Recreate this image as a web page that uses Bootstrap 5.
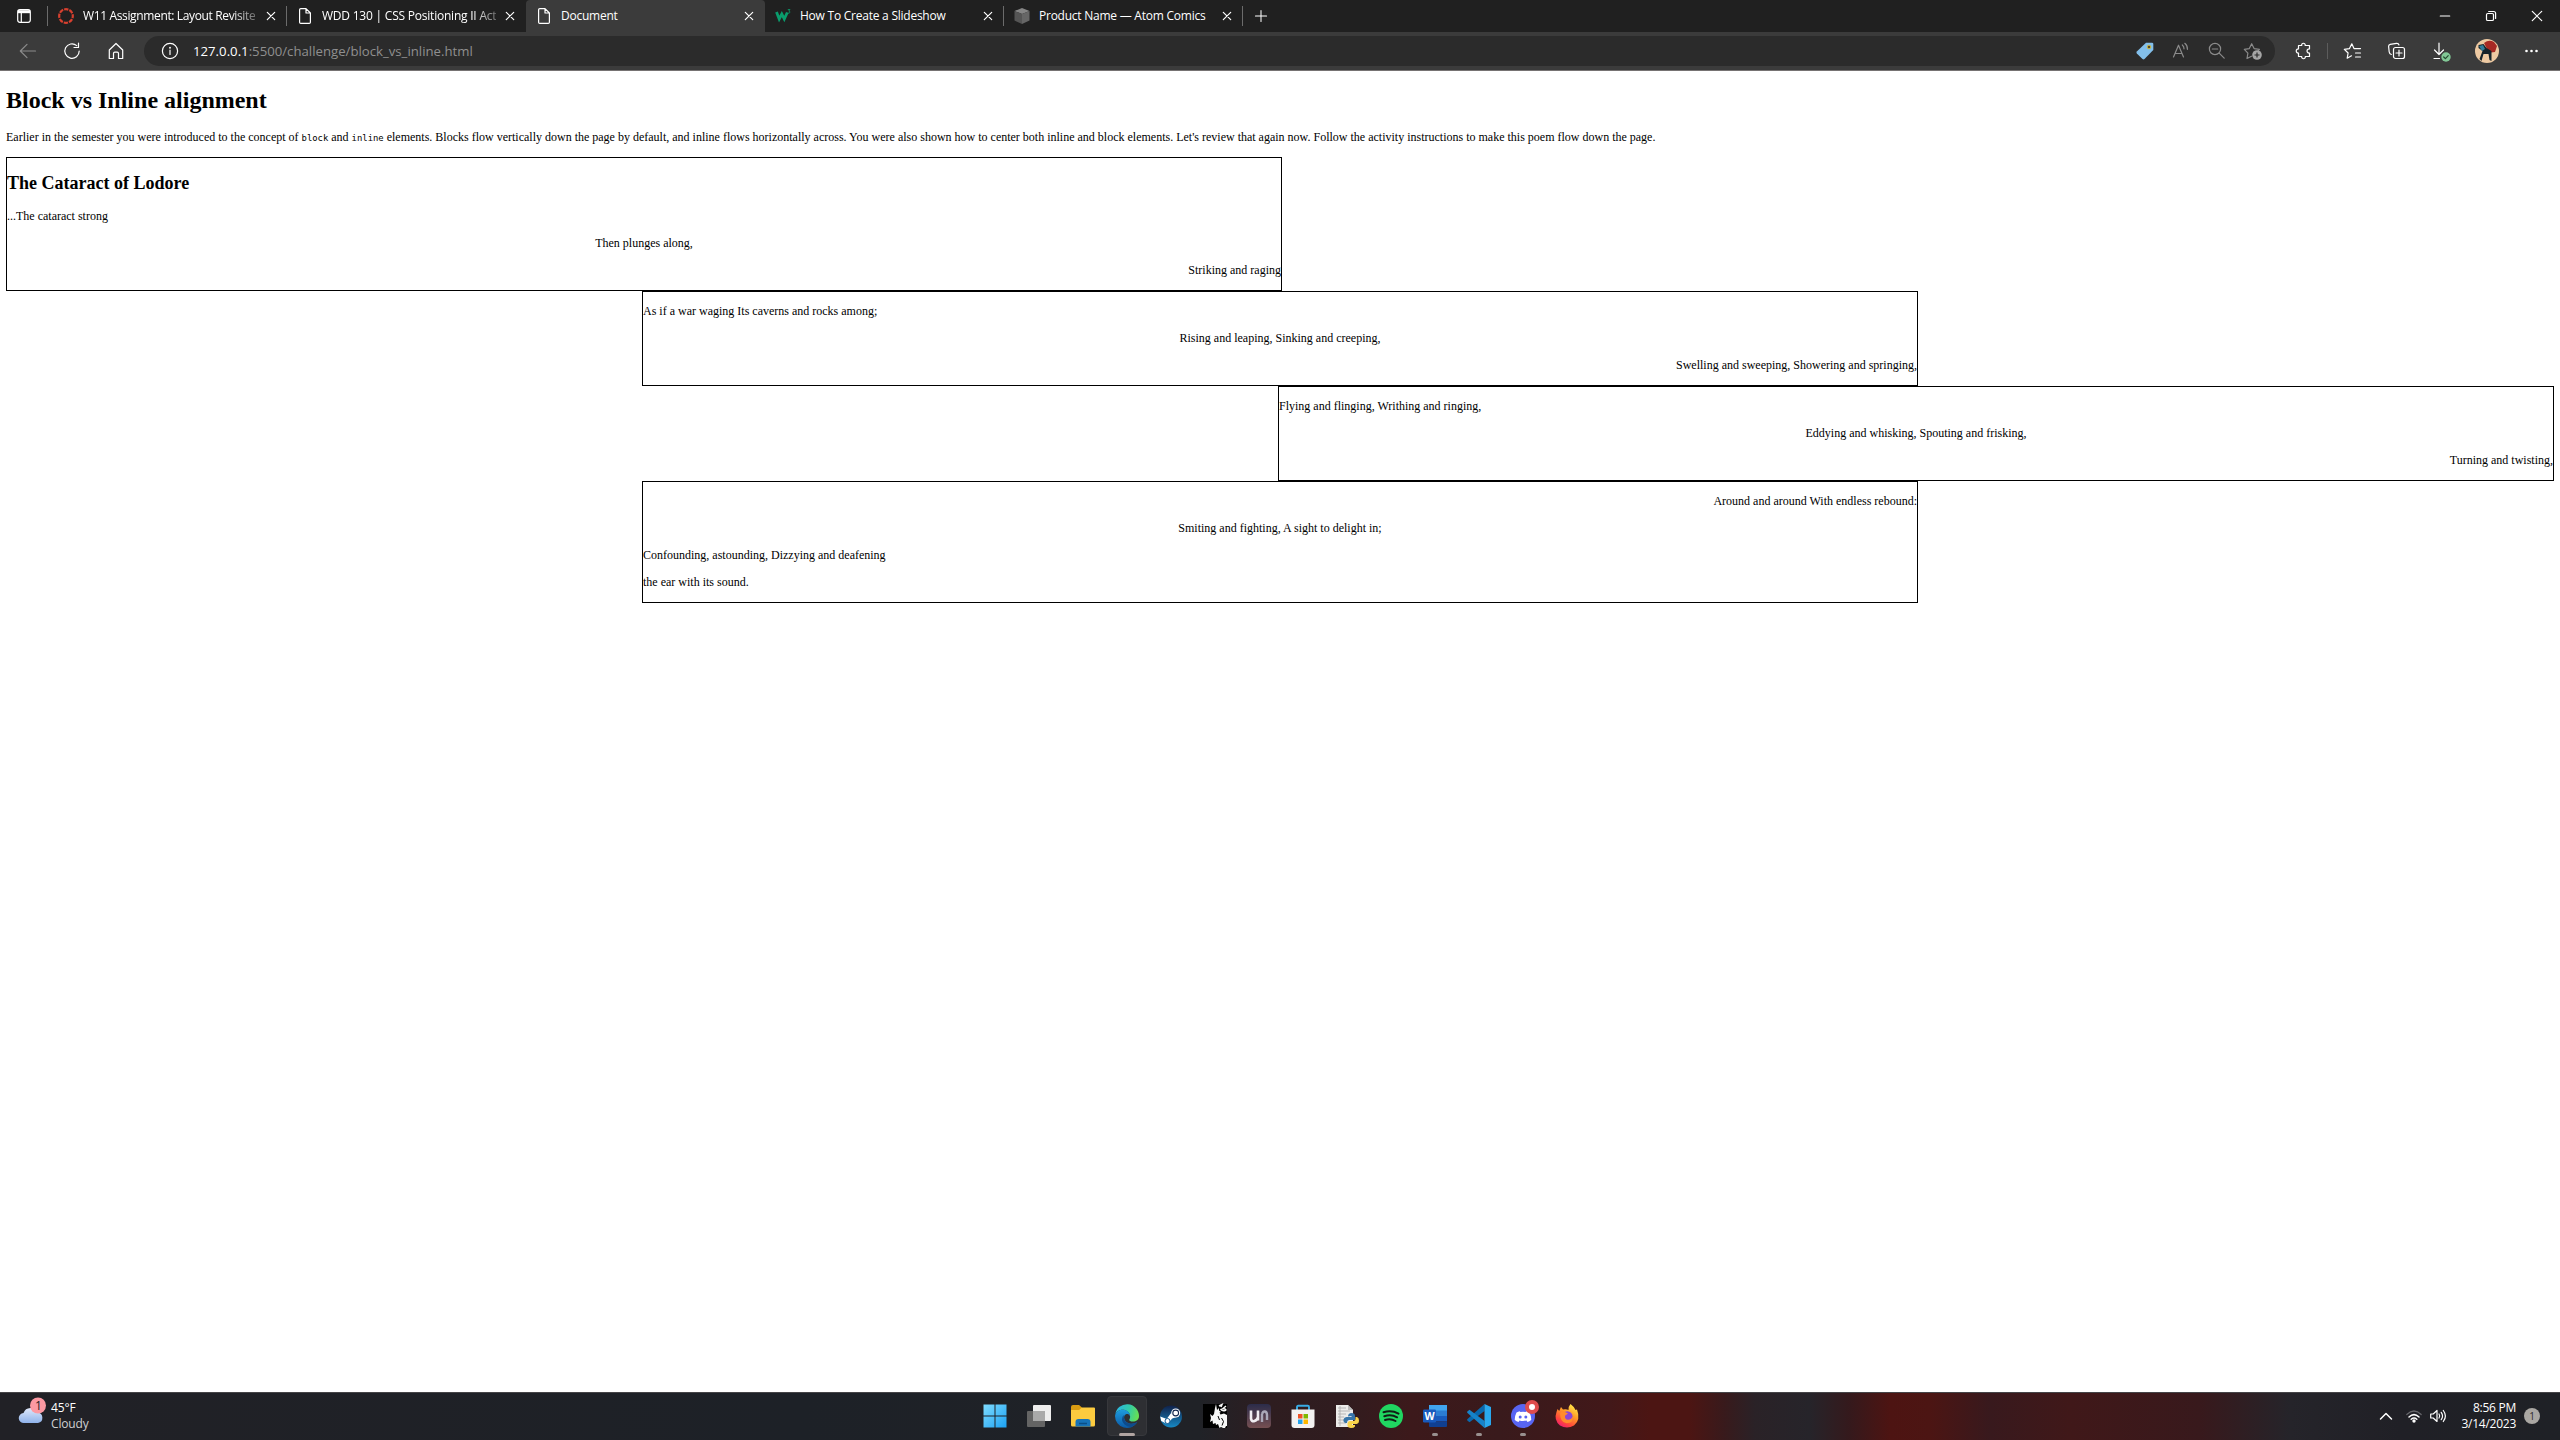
<!DOCTYPE html>
<html lang="en">
<head>
<meta charset="utf-8">
<meta name="viewport" content="width=device-width, initial-scale=1">
<title>Document</title>
<link href="https://cdn.jsdelivr.net/npm/bootstrap@5.3.0/dist/css/bootstrap.min.css" rel="stylesheet">
<style>
  body { font-family: "Open Sans", "Noto Sans", sans-serif; background: #fff; color: #000; overflow: hidden; }
  svg { display: block; flex: none; overflow: visible; }
  .ln { fill: none; stroke: #fff; stroke-width: 1.2; stroke-linecap: round; stroke-linejoin: round; }
  .dim { stroke: #8b8b8b; }

  /* tab strip */
  .tabstrip { height: 32px; background: #202020; }
  .tab-menu { width: 47px; }
  .btab { width: 239px; padding: 0 8px 0 10px; color: #fff; font-size: 12px; letter-spacing: -.24px; line-height: 32px; position: relative; }
  .btab .ttl { margin-left: 9px; white-space: nowrap; }
  .btab .ttl.long { letter-spacing: -.36px; }
  .btab .ttl.long.second { letter-spacing: -.22px; }
  .fade-out { -webkit-mask-image: linear-gradient(90deg, #000 86%, rgba(0,0,0,.35) 100%); mask-image: linear-gradient(90deg, #000 86%, rgba(0,0,0,.35) 100%); }
  .btab.on { background: #3b3b3b; border-radius: 4px 4px 0 0; }
  .vline { width: 1px; height: 20px; background: #6b6b6b; }
  .btab .vline { position: absolute; right: 0; top: 6px; }
  .winbtn { width: 46px; }

  /* toolbar */
  .toolbar { height: 39px; background: #3b3b3b; border-bottom: 1px solid #767373; }
  .navset { padding-left: 6px; }
  .navbtn { width: 44px; }
  .addr { height: 30px; width: 2131px; background: #2b2b2b; border-radius: 15px; padding-left: 17px; padding-right: 12px; margin-left: 6px; }
  .addr-tools { gap: 16px; }
  .url { font-size: 13.2px; margin-left: 14px; color: #8f8f8f; line-height: 30px; white-space: nowrap; letter-spacing: 0; }
  .url span { color: #fff; }
  .tools { padding-left: 19px; }
  .tools .vline { margin: 0 15px 0 13px; height: 16px; background: #5c5c5c; }
  .gap-tool { margin-left: 24px; }
  .gap-avatar { margin-left: 20px; }

  /* document */
  .doc { height: 1321px; padding: 16px 6px 0; font-family: "Liberation Serif", serif; font-size: 12px; line-height: 15px; }
  .doc h1 { font-size: 24px; line-height: 27px; font-weight: 700; margin: 0 0 16px; }
  .doc h2 { font-size: 18px; line-height: 21px; font-weight: 700; margin: 3px 0 15px; }
  .doc p { margin: 0 0 12px; }
  .doc code { font-family: "DejaVu Sans Mono", monospace; font-size: 8.9px; line-height: 1; color: #000; }
  .stanza { width: 1276px; border: 1px solid #000; padding-top: 12px; }

  /* taskbar */
  .taskbar { height: 48px; border-top: 1px solid #454447; padding-bottom: 1px; color: #fff; font-size: 12px;
    background: linear-gradient(90deg, #212126 0, #1d2127 800px, #202227 1200px, #2e1d20 1270px, #301c1f 1340px, #3c191b 1410px, #391a1c 1500px, #421819 1610px, #4c1513 1650px, #4c1513 1690px, #381a1c 1725px, #2a2227 1755px, #26242a 1810px, #35191c 1850px, #4d1412 1890px, #4c1513 1930px, #38191d 1990px, #401819 2070px, #38191c 2200px, #25242a 2290px, #202026 2400px, #1f2126 2560px); }
  .weather { width: 973px; padding-left: 19px; }
  .two-line { line-height: 16px; letter-spacing: -.15px; }
  .muted-line { color: #d0d0d2; }
  .app { width: 44px; height: 46px; position: relative; }
  .app.cur::before { content: ""; position: absolute; inset: 3px 2px; background: #2e2f33; border: 1px solid #37383c; border-radius: 4px; }
  .app svg { position: relative; }
  .app i { position: absolute; bottom: 3px; left: 19px; width: 6px; height: 3px; border-radius: 2px; background: #99908f; }
  .app.cur i { left: 14px; width: 16px; background: #b0a4a1; }
  .tray { padding-right: 20px; }
  .tray .wifi { margin-left: 14px; }
  .tray .clock { width: 70px; letter-spacing: -.25px; }
</style>
<script src="https://cdn.jsdelivr.net/npm/bootstrap@5.3.0/dist/js/bootstrap.bundle.min.js"></script>
</head>
<body>

<header>
  <div class="tabstrip d-flex align-items-center">
    <div class="tab-menu d-flex align-items-center justify-content-center">
      <svg width="14" height="14" viewBox="0 0 14 14"><rect x=".7" y=".7" width="12.6" height="12.6" rx="2.2" class="ln"/><path d="M1 1.2h12v3H1z" fill="#fff"/><path d="M4.3 4v9" class="ln"/></svg>
    </div>
    <div class="vline"></div>
    <div class="btab d-flex align-items-center">
      <svg width="16" height="16" viewBox="0 0 16 16"><circle cx="8" cy="8" r="6.8" fill="none" stroke="#d8402f" stroke-width="2.2" stroke-dasharray="4.3 1.04" stroke-dashoffset="2.1"/></svg>
      <div class="ttl long fade-out">W11 Assignment: Layout Revisite</div>
      <svg class="ms-auto me-1" width="8" height="8" viewBox="0 0 8 8"><path class="ln" d="M.3.3l7.4 7.4M7.7.3.3 7.7"/></svg>
      <div class="vline"></div>
    </div>
    <div class="btab d-flex align-items-center">
      <svg width="16" height="16" viewBox="0 0 16 16"><path class="ln" d="M2.6 1.8q0-1.2 1.2-1.2H9L13.4 5v9.2q0 1.2-1.2 1.2H3.8q-1.2 0-1.2-1.2zM9 .8V5h4.3"/></svg>
      <div class="ttl long second fade-out">WDD 130 | CSS Positioning II Act</div>
      <svg class="ms-auto me-1" width="8" height="8" viewBox="0 0 8 8"><path class="ln" d="M.3.3l7.4 7.4M7.7.3.3 7.7"/></svg>
    </div>
    <div class="btab on h-100 d-flex align-items-center">
      <svg width="16" height="16" viewBox="0 0 16 16"><path class="ln" d="M2.6 1.8q0-1.2 1.2-1.2H9L13.4 5v9.2q0 1.2-1.2 1.2H3.8q-1.2 0-1.2-1.2zM9 .8V5h4.3"/></svg>
      <div class="ttl">Document</div>
      <svg class="ms-auto me-1" width="8" height="8" viewBox="0 0 8 8"><path class="ln" d="M.3.3l7.4 7.4M7.7.3.3 7.7"/></svg>
    </div>
    <div class="btab d-flex align-items-center">
      <svg width="16" height="16" viewBox="0 0 16 16"><path d="M1.500 4l2.700 7 2.600-5L9.300 11l3-6.500" fill="none" stroke="#0a9c6c" stroke-width="2.8"/><path d="M12.800 1.500h2.200l-1.200 1.500q1.500.3 1 1.600-.6 1-2.200.4" fill="none" stroke="#0a9c6c" stroke-width=".8"/></svg>
      <div class="ttl">How To Create a Slideshow</div>
      <svg class="ms-auto me-1" width="8" height="8" viewBox="0 0 8 8"><path class="ln" d="M.3.3l7.4 7.4M7.7.3.3 7.7"/></svg>
      <div class="vline"></div>
    </div>
    <div class="btab d-flex align-items-center">
      <svg width="16" height="16" viewBox="0 0 16 16"><path d="M8 0l7.5 3L8 6 .5 3z" fill="#858585"/><path d="M.5 3L8 6v10L.5 12.500z" fill="#555"/><path d="M15.500 3L8 6v10l7.500-3.500z" fill="#666"/></svg>
      <div class="ttl">Product Name — Atom Comics</div>
      <svg class="ms-auto me-1" width="8" height="8" viewBox="0 0 8 8"><path class="ln" d="M.3.3l7.4 7.4M7.7.3.3 7.7"/></svg>
      <div class="vline"></div>
    </div>
    <svg class="ms-2 ps-1" width="16" height="14" viewBox="0 0 14 14"><path class="ln" d="M7 .5v13M.5 7h13"/></svg>
    <div class="ms-auto d-flex">
      <div class="winbtn d-flex align-items-center justify-content-center"><svg width="10" height="10" viewBox="0 0 10 10"><path class="ln" d="M.3 5h9.400"/></svg></div>
      <div class="winbtn d-flex align-items-center justify-content-center"><svg width="10" height="10" viewBox="0 0 10 10"><rect class="ln" x=".5" y="2.500" width="7" height="7" rx="1.300"/><path class="ln" d="M2.700.5h5q1.900 0 1.900 1.900v5"/></svg></div>
      <div class="winbtn d-flex align-items-center justify-content-center"><svg width="10" height="10" viewBox="0 0 10 10"><path class="ln" d="M.3.3l9.400 9.400M9.700.3.3 9.700"/></svg></div>
    </div>
  </div>

  <div class="toolbar d-flex align-items-center">
    <div class="navset d-flex">
      <div class="navbtn d-flex justify-content-center"><svg width="20" height="20" viewBox="0 0 20 20"><path class="ln dim" d="M17.500 10h-15M9 3.300L2.300 10 9 16.700"/></svg></div>
      <div class="navbtn d-flex justify-content-center"><svg width="20" height="20" viewBox="0 0 20 20"><path class="ln" d="M17.200 10A7.200 7.200 0 1 1 14.700 4.600M16.500 2v4.500H12"/></svg></div>
      <div class="navbtn d-flex justify-content-center"><svg width="20" height="20" viewBox="0 0 20 20"><path class="ln" d="M3.300 9L10 2.500 16.700 9v8.500h-4.200v-5q0-1.300-1.300-1.300H8.800q-1.300 0-1.300 1.300v5H3.300z"/></svg></div>
    </div>
    <div class="addr d-flex align-items-center">
      <svg width="18" height="18" viewBox="0 0 18 18"><circle class="ln" cx="9" cy="9" r="7.600"/><path class="ln" d="M9 8v4.500"/><circle cx="9" cy="5.700" r=".95" fill="#fff"/></svg>
      <div class="url"><span>127.0.0.1</span>:5500/challenge/block_vs_inline.html</div>
      <div class="addr-tools ms-auto d-flex">
        <svg width="20" height="20" viewBox="0 0 20 20"><path d="M11 1.700h6q1.300 0 1.300 1.300v6L9.500 18q-1 .8-2 0L1.800 12.500q-.8-1 0-2z" fill="#83bfea"/><circle cx="14" cy="6" r="1.800" fill="#564a2b" stroke="#d8bd37" stroke-width=".9"/></svg>
        <svg width="20" height="20" viewBox="0 0 20 20"><path class="ln dim" d="M2.500 16L7.500 4.200 12.500 16M4 12.500h7M11.300 4q1.800 1.500 1.700 3.800M13.800 2.300q2.800 2.200 2.600 6"/></svg>
        <svg width="20" height="20" viewBox="0 0 20 20"><circle class="ln dim" cx="8" cy="8" r="5.600"/><path class="ln dim" d="M12.200 12.200l5 5M5.300 8h5.400"/></svg>
        <svg width="20" height="20" viewBox="0 0 20 20"><path class="ln dim" d="M8.500 15.200L4 17.500l.9-5.300L1.300 8.400l5-.8L8.700 2.700l2.400 4.900 5.300.8-1.200 1.200"/><circle cx="14" cy="14" r="4.800" fill="#a5a5a5"/><path d="M14 11.500v5M11.500 14h5" stroke="#2b2b2b" stroke-width="1.200"/></svg>
      </div>
    </div>
    <div class="tools d-flex align-items-center flex-grow-1">
      <svg width="20" height="20" viewBox="0 0 20 20"><path class="ln" d="M4.500 4.500h3.200C7 1.500 11.800 1.500 11.200 4.500h4.300V8c-3.300-.5-3.300 4.500 0 4v3.500h-4.200c.4 3-4 3-3.600 0H4.500V12C1.500 12.500 1.500 7.600 4.500 8z"/></svg>
      <div class="vline"></div>
      <svg width="20" height="20" viewBox="0 0 20 20"><path class="ln" d="M8.500 14.800l-4.300 2.400.9-5.200-3.800-3.700 5.200-.7L8.800 2.800l2.200 4.800h6.500M12.500 12h5M12.500 16h5"/></svg>
      <svg class="gap-tool" width="20" height="20" viewBox="0 0 20 20"><rect class="ln" x="6.500" y="6.500" width="11" height="11" rx="2"/><path class="ln" d="M12 9v6M9 12h6M4.300 13.500Q2.500 13 2.200 11L1.600 5.500Q1.500 3.800 3.200 3.400L9.500 2.300Q11.500 2.100 12 4"/></svg>
      <svg class="gap-tool" width="24" height="20" viewBox="0 0 24 20"><path class="ln" d="M8 2v11M3.500 9L8 13.500 12.500 9M3 17.500h5.500"/><circle cx="15" cy="16" r="4.700" fill="#82c896"/><path class="ln" style="stroke:#244b30" d="M12.700 16l1.700 1.600 2.800-3"/></svg>
      <svg class="gap-avatar" width="24" height="24" viewBox="0 0 24 24"><circle cx="12" cy="12" r="12" fill="#edc9a2"/><path d="M9 4q5-4 10-1l3 4-2 6-8 1-3-3 3-1z" fill="#a72a24"/><path d="M3.500 6l5-1 3 4 5 3v10l-2-1-1-6-5 0-2 7-2-2 3-8-4-3z" fill="#15232b"/><path d="M4 7l4-1 2 4-3 2z" fill="#337d9b"/></svg>
      <svg class="gap-tool" width="16" height="4" viewBox="0 0 16 4"><circle cx="3.500" cy="2" r="1.300" fill="#fff"/><circle cx="8.500" cy="2" r="1.300" fill="#fff"/><circle cx="13.500" cy="2" r="1.300" fill="#fff"/></svg>
    </div>
  </div>
</header>

<main class="doc">
  <h1>Block vs Inline alignment</h1>
  <p>Earlier in the semester you were introduced to the concept of <code>block</code> and <code>inline</code> elements. Blocks flow vertically down the page by default, and inline flows horizontally across. You were also shown how to center both inline and block elements. Let's review that again now. Follow the activity instructions to make this poem flow down the page.</p>
  <section class="stanza">
    <h2>The Cataract of Lodore</h2>
    <p>...The cataract strong</p>
    <p class="text-center">Then plunges along,</p>
    <p class="text-end">Striking and raging</p>
  </section>
  <section class="stanza mx-auto">
    <p>As if a war waging Its caverns and rocks among;</p>
    <p class="text-center">Rising and leaping, Sinking and creeping,</p>
    <p class="text-end">Swelling and sweeping, Showering and springing,</p>
  </section>
  <section class="stanza ms-auto">
    <p>Flying and flinging, Writhing and ringing,</p>
    <p class="text-center">Eddying and whisking, Spouting and frisking,</p>
    <p class="text-end">Turning and twisting,</p>
  </section>
  <section class="stanza mx-auto">
    <p class="text-end">Around and around With endless rebound:</p>
    <p class="text-center">Smiting and fighting, A sight to delight in;</p>
    <p>Confounding, astounding, Dizzying and deafening</p>
    <p>the ear with its sound.</p>
  </section>
</main>

<footer class="taskbar d-flex align-items-center">
  <div class="weather d-flex align-items-center">
    <svg width="24" height="32" viewBox="0 0 24 32"><defs><linearGradient id="cl" x1="0" y1="0" x2="0" y2="1"><stop offset="0" stop-color="#dfe9fb"/><stop offset="1" stop-color="#8fb2ea"/></linearGradient></defs><path d="M5 23a5 5 0 0 1-.5-10A7.500 7.500 0 0 1 18.500 12.500 5.300 5.300 0 0 1 19 23z" fill="url(#cl)"/><circle cx="19" cy="5.500" r="8" fill="#fc99a2"/><text x="19.500" y="9.800" font-size="12" text-anchor="middle" fill="#222">1</text></svg>
    <div class="two-line ms-2"><div>45°F</div><div class="muted-line">Cloudy</div></div>
  </div>
  <div class="d-flex">
    <div class="app d-flex align-items-center justify-content-center"><svg width="24" height="24" viewBox="0 0 24 24"><defs><linearGradient id="wn" x1="0" y1="0" x2="1" y2="1"><stop offset="0" stop-color="#7fdcff"/><stop offset="1" stop-color="#1ba1f3"/></linearGradient></defs><path d="M.5.5h11v11H.5zM12.500.5h11v11h-11zM.5 12.500h11v11H.5zM12.500 12.500h11v11h-11z" fill="url(#wn)"/></svg></div>
    <div class="app d-flex align-items-center justify-content-center"><svg width="24" height="24" viewBox="0 0 24 24"><rect x="6" y="1" width="18" height="16" rx="1" fill="#ededed"/><rect x="0" y="7" width="18" height="16" rx="1" fill="#646464"/><path d="M6 7h12v10H6z" fill="#a9a9a9"/></svg></div>
    <div class="app d-flex align-items-center justify-content-center"><svg width="24" height="24" viewBox="0 0 24 24"><path d="M0 3q0-2 2-2h6l3 2.500V8H0z" fill="#d99c12"/><path d="M0 6h8l3-2.500h12q1 0 1 1V21q0 1.500-1.500 1.500h-21Q0 22.500 0 21z" fill="#fccb3f"/><path d="M4.500 22.500V18q0-3 3-3h9q3 0 3 3v4.500z" fill="#1673b8"/><path d="M8 19.500h8" stroke="#0b4f86" stroke-width="1.500"/></svg></div>
    <div class="app cur d-flex align-items-center justify-content-center"><svg width="24" height="24" viewBox="0 0 24 24"><defs><linearGradient id="e1" x1="0" y1=".3" x2="1" y2=".5"><stop offset="0" stop-color="#2bb5e6"/><stop offset=".55" stop-color="#31cba8"/><stop offset="1" stop-color="#69df51"/></linearGradient><linearGradient id="e2" x1="0" y1="0" x2="0" y2="1"><stop offset="0" stop-color="#1d9bdf"/><stop offset="1" stop-color="#0c59a4"/></linearGradient></defs><path d="M.3 10.500A11.900 11.900 0 0 1 24 12c0 4-3 5.500-6 5.500-2.500 0-4-.8-3.800-1.800.3-.6 1-1.500.9-3.200C15 8 11 5.800 7.800 5.800 4 5.800 1 8 .3 10.500z" fill="url(#e1)"/><path d="M0 12C.5 7.500 4.500 5.800 7.800 5.800c4 0 7.200 2.500 7.300 6.500-1-2.300-3-2.500-4.100-2-3.500 1.700-2 8 3.500 9.200 3 .6 5.500-.2 7.700-1.200A12 12 0 0 1 0 12z" fill="url(#e2)"/><path d="M8.500 11q-3.500 5 1 9.500 3.500 3 7.500 2.300 3-1.200 5.200-4.500-4 2-8 1.200-5.500-1.500-5.700-8.500z" fill="#0e4b8b"/></svg><i></i></div>
    <div class="app d-flex align-items-center justify-content-center"><svg width="24" height="24" viewBox="0 0 24 24"><defs><linearGradient id="st" x1="0" y1="0" x2="0" y2="1"><stop offset="0" stop-color="#10214a"/><stop offset="1" stop-color="#1789c4"/></linearGradient></defs><circle cx="12" cy="12.500" r="11" fill="url(#st)"/><path d="M1.200 12.500l6.500 2.500 4-5.500h4l2 3.500-4.500 1.500-3 3.500-3 1.500-5-2.500z" fill="#fff"/><circle cx="16.700" cy="9" r="4.500" fill="#fff"/><circle cx="16.700" cy="9" r="2.900" fill="#fff" stroke="#16294f" stroke-width="1.100"/><circle cx="8.500" cy="17" r="2.500" fill="#fff" stroke="#145b93"/></svg></div>
    <div class="app d-flex align-items-center justify-content-center"><svg width="24" height="24" viewBox="0 0 24 24"><path d="M0 0h24v24H0z" fill="#000"/><path d="M13 0l-1 4-1 6-1.500 2L7 10l1 4-1 4 2.500-1.500L10 20l2.500-1 .5 2 2-1 1.500 4 1.500-1 2 1h2l1-2h1V11l-3-1.500-3.500 1-1-2L18 8l-2-1.500V4l-2 2z" fill="#f7f7f7"/><path d="M16 2l3-1.500L18 3M17.500 5q2 2.500 4.500 1.500T20 4.500l3-2.500" fill="none" stroke="#f7f7f7" stroke-width="1.500"/><path d="M18.500 14l2 3.500-1.500 4M15 12l1.500 4" fill="none" stroke="#000" stroke-width="1"/></svg></div>
    <div class="app d-flex align-items-center justify-content-center"><svg width="24" height="24" viewBox="0 0 24 24"><defs><linearGradient id="mu" x1="0" y1="0" x2="0" y2="1"><stop offset="0" stop-color="#2b2c4a"/><stop offset="1" stop-color="#765052"/></linearGradient></defs><rect width="24" height="24" rx="4" fill="url(#mu)"/><path d="M4 6.500v8q.5 3.500 3.500 2.500t3.500-4V6.500v10" fill="none" stroke="#f0eef2" stroke-width="2.600"/><path d="M15 18V10M15 10q1-3 3-2.500t2 3.500v5" fill="none" stroke="#aaa8b8" stroke-width="2.400"/></svg></div>
    <div class="app d-flex align-items-center justify-content-center"><svg width="24" height="24" viewBox="0 0 24 24"><path d="M6 6V3q0-1.200 1.200-1.200h9.600Q18 1.800 18 3v3" fill="none" stroke="#39ace5" stroke-width="1.900"/><path d="M.5 5.500h23V21q0 3-3 3h-17q-3 0-3-3z" fill="#f3f2f1"/><path d="M7 10h4.500v4.500H7z" fill="#ef5325"/><path d="M12.500 10H17v4.500h-4.500z" fill="#7eb900"/><path d="M7 15.500h4.500V20H7z" fill="#22a2ec"/><path d="M12.500 15.500H17V20h-4.500z" fill="#feb800"/></svg></div>
    <div class="app d-flex align-items-center justify-content-center"><svg width="24" height="24" viewBox="0 0 24 24"><path d="M1 1h12l5 5v17H1z" fill="#ececea"/><path d="M13 1v5h5" fill="#bbb"/><path d="M3 4h8M3 7h12M3 10h8M3 13h6M3 16h7M3 19h8M5 2v20" stroke="#aaa" fill="none" stroke-width=".8"/><path d="M13 12.500Q13 9 16.500 9T20 12v4h-5.500q-2.500 0-2.500 3h-1.500Q8 18 8.500 15.500t3-2.500h5v-1z" fill="#3775a9"/><path d="M20.500 13h1.500q2 .5 2 3.500T21.500 20H17v1h3v1.500q-1 1.500-4 1.500t-3.500-2v-3q.5-2 2.500-2h4q1.500-.5 1.500-2.500z" fill="#fad44c"/></svg></div>
    <div class="app d-flex align-items-center justify-content-center"><svg width="24" height="24" viewBox="0 0 24 24"><circle cx="12" cy="12" r="12" fill="#20d661"/><path d="M4.500 8.300Q12.500 5.800 19.500 9.600M5.300 12.200q7-2.200 12.800 1.100M6 16q5.800-1.700 10.500 1" fill="none" stroke="#111c16" stroke-width="2" stroke-linecap="round"/></svg></div>
    <div class="app d-flex align-items-center justify-content-center"><svg width="24" height="24" viewBox="0 0 24 24"><path d="M6 1h18v6H6z" fill="#41a5ee"/><path d="M6 6.500h18V12H6z" fill="#2b7cd3"/><path d="M6 12h18v5.500H6z" fill="#185abd"/><path d="M6 17.500h18V22q0 1-1 1H7q-1 0-1-1z" fill="#103f91"/><rect y="5.500" width="13" height="13" rx="1.200" fill="#185abd"/><text x="6.500" y="15.800" font-size="10.500" font-weight="700" text-anchor="middle" fill="#fff">W</text></svg><i></i></div>
    <div class="app d-flex align-items-center justify-content-center"><svg width="24" height="24" viewBox="0 0 24 24"><path d="M17.500 0v7L2.500 18.300.3 16.500q-.6-.8.2-1.500z" fill="#0868ae"/><path d="M17.500 24v-7L2.500 5.700.3 7.500q-.6.8.2 1.500z" fill="#1683ca"/><path d="M17.500 0L24 3v18l-6.500 3z" fill="#29a8ee"/></svg><i></i></div>
    <div class="app d-flex align-items-center justify-content-center"><svg width="24" height="24" viewBox="0 0 24 24"><circle cx="12" cy="12" r="12" fill="#5865f2"/><path d="M8.500 7.200l1 .9q2.500-.5 5 0l1-.9 3 1.200q2 4 1.700 7.700-1.700 1.500-3.700 1.800l-1-1.500q-3.500 1-7 0l-1 1.500q-2-.3-3.700-1.800-.3-3.700 1.700-7.700z" fill="#fff"/><circle cx="9.200" cy="13" r="1.500" fill="#5865f2"/><circle cx="14.800" cy="13" r="1.500" fill="#5865f2"/><circle cx="21" cy="3" r="5" fill="#fff" stroke="#df4c4c" stroke-width="4"/></svg><i></i></div>
    <div class="app d-flex align-items-center justify-content-center"><svg width="24" height="24" viewBox="0 0 24 24"><defs><linearGradient id="ff" x1=".8" y1="0" x2=".2" y2="1"><stop offset="0" stop-color="#fff04a"/><stop offset=".4" stop-color="#ff9a27"/><stop offset=".75" stop-color="#ff453c"/><stop offset="1" stop-color="#ec177b"/></linearGradient></defs><path d="M15.500 0q4 3 5 6l1.500-.5Q26 16 19 21.500q-7 4-14 0Q-1.500 16 1.500 8l1-3 1.700 2L6 3l2 2.500q3.500-.5 5.500.5Q13.500 2 15.500 0z" fill="url(#ff)"/><circle cx="12.300" cy="12.500" r="5.300" fill="#8a46d8"/><path d="M5 9q3-2.500 6-.5l2 1-3 2.300q-.5 3.700 3 4 3 0 5-3.500.5 7-6.500 7Q5 18.500 5 9z" fill="#ff8b2c"/></svg></div>
  </div>
  <div class="tray ms-auto d-flex align-items-center">
    <svg width="12" height="8" viewBox="0 0 12 8"><path class="ln" style="stroke-width:1.500" d="M.5 7L6 1.500 11.500 7"/></svg>
    <svg class="wifi" width="16" height="14" viewBox="0 0 16 14"><path class="ln" style="stroke:#66666b" d="M.8 5.500Q8-1.500 15.200 5.500"/><path class="ln" style="stroke-width:1.500" d="M3 8q5-4.700 10 0M5.200 10.200q2.800-2.500 5.600 0"/><circle cx="8" cy="12" r="1.700" fill="#fff"/></svg>
    <svg class="ms-2" width="16" height="14" viewBox="0 0 16 14"><path class="ln" d="M.7 5h2.500L7 1.500v11L3.200 9H.7zM9 5q1.400 2 0 4M11.200 3.300q2.700 3.700 0 7.400M13.300 1.500q4.200 5.500 0 11"/></svg>
    <div class="clock two-line text-end">8:56 PM<br>3/14/2023</div>
    <svg class="ms-2" width="16" height="16" viewBox="0 0 16 16"><circle cx="8" cy="8" r="8" fill="#aaa7a3"/><text x="8" y="11.700" font-size="10" text-anchor="middle" fill="#2c2c2c">1</text></svg>
  </div>
</footer>
</body>
</html>
